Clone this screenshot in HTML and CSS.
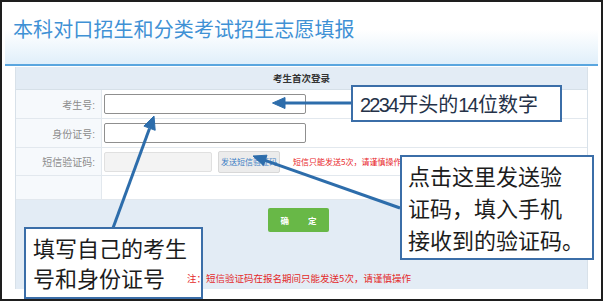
FILE: index.html
```html
<!DOCTYPE html>
<html lang="zh-CN">
<head>
<meta charset="utf-8">
<title>本科对口招生和分类考试招生志愿填报</title>
<link rel="stylesheet" href="styles.css">
</head>
<body>
<div class="stage">
  <div class="frame">
    <div class="header">
      <h1 class="title">本科对口招生和分类考试招生志愿填报</h1>
    </div>
    <div class="panel">
      <div class="panel-head">考生首次登录</div>
      <div class="row row-tall">
        <div class="label">考生号:</div>
        <div class="field"><input class="text-input" type="text"></div>
      </div>
      <div class="row row-tall">
        <div class="label">身份证号:</div>
        <div class="field"><input class="text-input" type="text"></div>
      </div>
      <div class="row row-mid">
        <div class="label">短信验证码:</div>
        <div class="field">
          <input class="text-input code-input" type="text" disabled>
          <button class="sms-btn" type="button">发送短信验证码</button>
          <span class="hint">短信只能发送5次，请谨慎操作</span>
        </div>
      </div>
      <div class="row row-short">
        <div class="label"></div>
        <div class="field"></div>
      </div>
      <div class="panel-foot">
        <button class="ok-btn" type="button"><span>确</span><span>定</span></button>
        <div class="notice">注：短信验证码在报名期间只能发送5次，请谨慎操作</div>
      </div>
    </div>
  </div>

  <svg class="arrows" width="605" height="303" viewBox="0 0 605 303">
    <g fill="#2d6dab" stroke="#2d6dab">
      <line x1="113" y1="228" x2="149.5" y2="128.5" stroke-width="3"/>
      <polygon points="154,116 155.2,130.3 143.9,126.1" stroke-width="1"/>
      <line x1="352" y1="103" x2="284" y2="103" stroke-width="3"/>
      <polygon points="272.5,103 285,97.5 285,108.5" stroke-width="1"/>
      <line x1="400" y1="208" x2="265" y2="160.3" stroke-width="3"/>
      <polygon points="253,156 267,155.2 263.4,165.6" stroke-width="1"/>
    </g>
  </svg>

  <div class="callout callout-id">填写自己的考生<br>号和身份证号</div>
  <div class="callout callout-num"><span class="digits">2234</span>开头的<span class="digits">14</span>位数字</div>
  <div class="callout callout-sms">点击这里发送验<br>证码，填入手机<br>接收到的验证码。</div>
</div>
</body>
</html>
```
FILE: styles.css
```css
html, body {
  margin: 0;
  padding: 0;
  background: #ffffff;
}

body {
  font-family: "Liberation Sans", "Noto Sans CJK SC", sans-serif;
}

.stage {
  position: relative;
  width: 605px;
  height: 303px;
  overflow: hidden;
}

.frame {
  box-sizing: border-box;
  width: 603px;
  height: 301px;
  border: 2px solid #1e1e1e;
  background: #ffffff;
}

.header {
  box-sizing: border-box;
  margin-left: 3px;
  width: 593px;
  height: 64px;
  padding: 16px 0 0 8px;
  border-bottom: 2px solid #5aa6df;
  background: linear-gradient(to bottom, #ffffff 0%, #ffffff 45%, #e0effa 100%);
}

.title {
  margin: 0;
  font-family: "Noto Sans CJK SC", sans-serif;
  font-weight: 400;
  font-size: 20px;
  line-height: 22px;
  color: #3f91d5;
  letter-spacing: 0.1px;
}

.panel {
  box-sizing: border-box;
  margin: 1px 0 0 13px;
  width: 573px;
  border-left: 1px solid #d8e1e9;
  border-right: 1px solid #d8e1e9;
}

.panel-head {
  box-sizing: border-box;
  height: 23px;
  line-height: 22px;
  border-bottom: 1px solid #d6e0e8;
  background: #e3ecf5;
  text-align: center;
  font-family: "Noto Sans CJK SC", sans-serif;
  font-weight: 700;
  font-size: 9.5px;
  color: #333333;
}

.row {
  box-sizing: border-box;
  display: grid;
  grid-template-columns: 86px 1fr;
  border-bottom: 1px solid #e2e8ee;
}

.row-tall { height: 29px; }
.row-mid { height: 28px; }
.row-short { height: 24px; }

.label {
  box-sizing: border-box;
  display: flex;
  align-items: center;
  justify-content: flex-end;
  padding-right: 6px;
  background: #f6f9fc;
  border-right: 1px solid #e2e8ee;
  font-size: 10px;
  color: #8c8c8c;
}

.field {
  display: flex;
  align-items: center;
  padding-left: 2px;
  background: #ffffff;
}

.text-input {
  box-sizing: border-box;
  width: 202px;
  height: 20px;
  margin: 0;
  padding: 0 4px;
  border: 1px solid #8f8f8f;
  border-radius: 2px;
  background: #ffffff;
  font-size: 10px;
  outline: none;
}

.code-input {
  width: 108px;
  border-color: #e0e0e0;
  background: #f3f3f3;
}

.sms-btn {
  box-sizing: border-box;
  width: 62px;
  height: 22px;
  margin: 0 0 0 6px;
  padding: 0;
  border: 1px solid #d8d8d8;
  border-radius: 2px;
  background: #ececec;
  color: #3b7cc4;
  font-family: "Noto Sans CJK SC", sans-serif;
  font-size: 8px;
  line-height: 20px;
}

.hint {
  margin-left: 13px;
  font-family: "Noto Sans CJK SC", sans-serif;
  font-size: 8px;
  color: #e8262a;
}

.panel-foot {
  box-sizing: border-box;
  height: 89px;
  display: flex;
  flex-direction: column;
  align-items: center;
  padding-top: 8px;
  background: #e3ecf5;
}

.ok-btn {
  display: flex;
  align-items: center;
  justify-content: center;
  gap: 19px;
  width: 61px;
  height: 24px;
  margin: 0 0 0 -6px;
  padding: 0;
  border: none;
  border-radius: 2px;
  background: #68b847;
  color: #ffffff;
  font-family: "Noto Sans CJK SC", sans-serif;
  font-weight: 700;
  font-size: 8.5px;
}

.notice {
  position: relative;
  z-index: 3;
  margin-top: 40px;
  margin-left: -5px;
  font-family: "Noto Sans CJK SC", sans-serif;
  font-size: 9.5px;
  line-height: 12px;
  color: #e42a2a;
}

.arrows {
  position: absolute;
  left: 0;
  top: 0;
  z-index: 1;
  pointer-events: none;
}

.callout {
  position: absolute;
  z-index: 2;
  box-sizing: border-box;
  border: 2px solid #3b6ea8;
  background: #ffffff;
  font-family: "Noto Sans CJK SC", sans-serif;
  font-weight: 400;
  color: #1c1c1c;
  white-space: nowrap;
}

.callout-id {
  left: 24px;
  top: 227px;
  width: 179px;
  height: 72px;
  padding: 3px 0 0 7px;
  font-size: 22px;
  line-height: 30px;
}

.callout-num {
  left: 351px;
  top: 85px;
  width: 211px;
  height: 37px;
  padding-left: 7px;
  font-size: 20px;
  line-height: 33px;
  color: #253248;
}

.digits {
  font-family: "Liberation Sans", sans-serif;
  letter-spacing: -1.8px;
  margin-right: 1px;
}

.callout-sms {
  left: 400px;
  top: 155px;
  width: 194px;
  height: 105px;
  padding: 2px 0 0 6px;
  font-size: 22px;
  line-height: 32px;
}
```
